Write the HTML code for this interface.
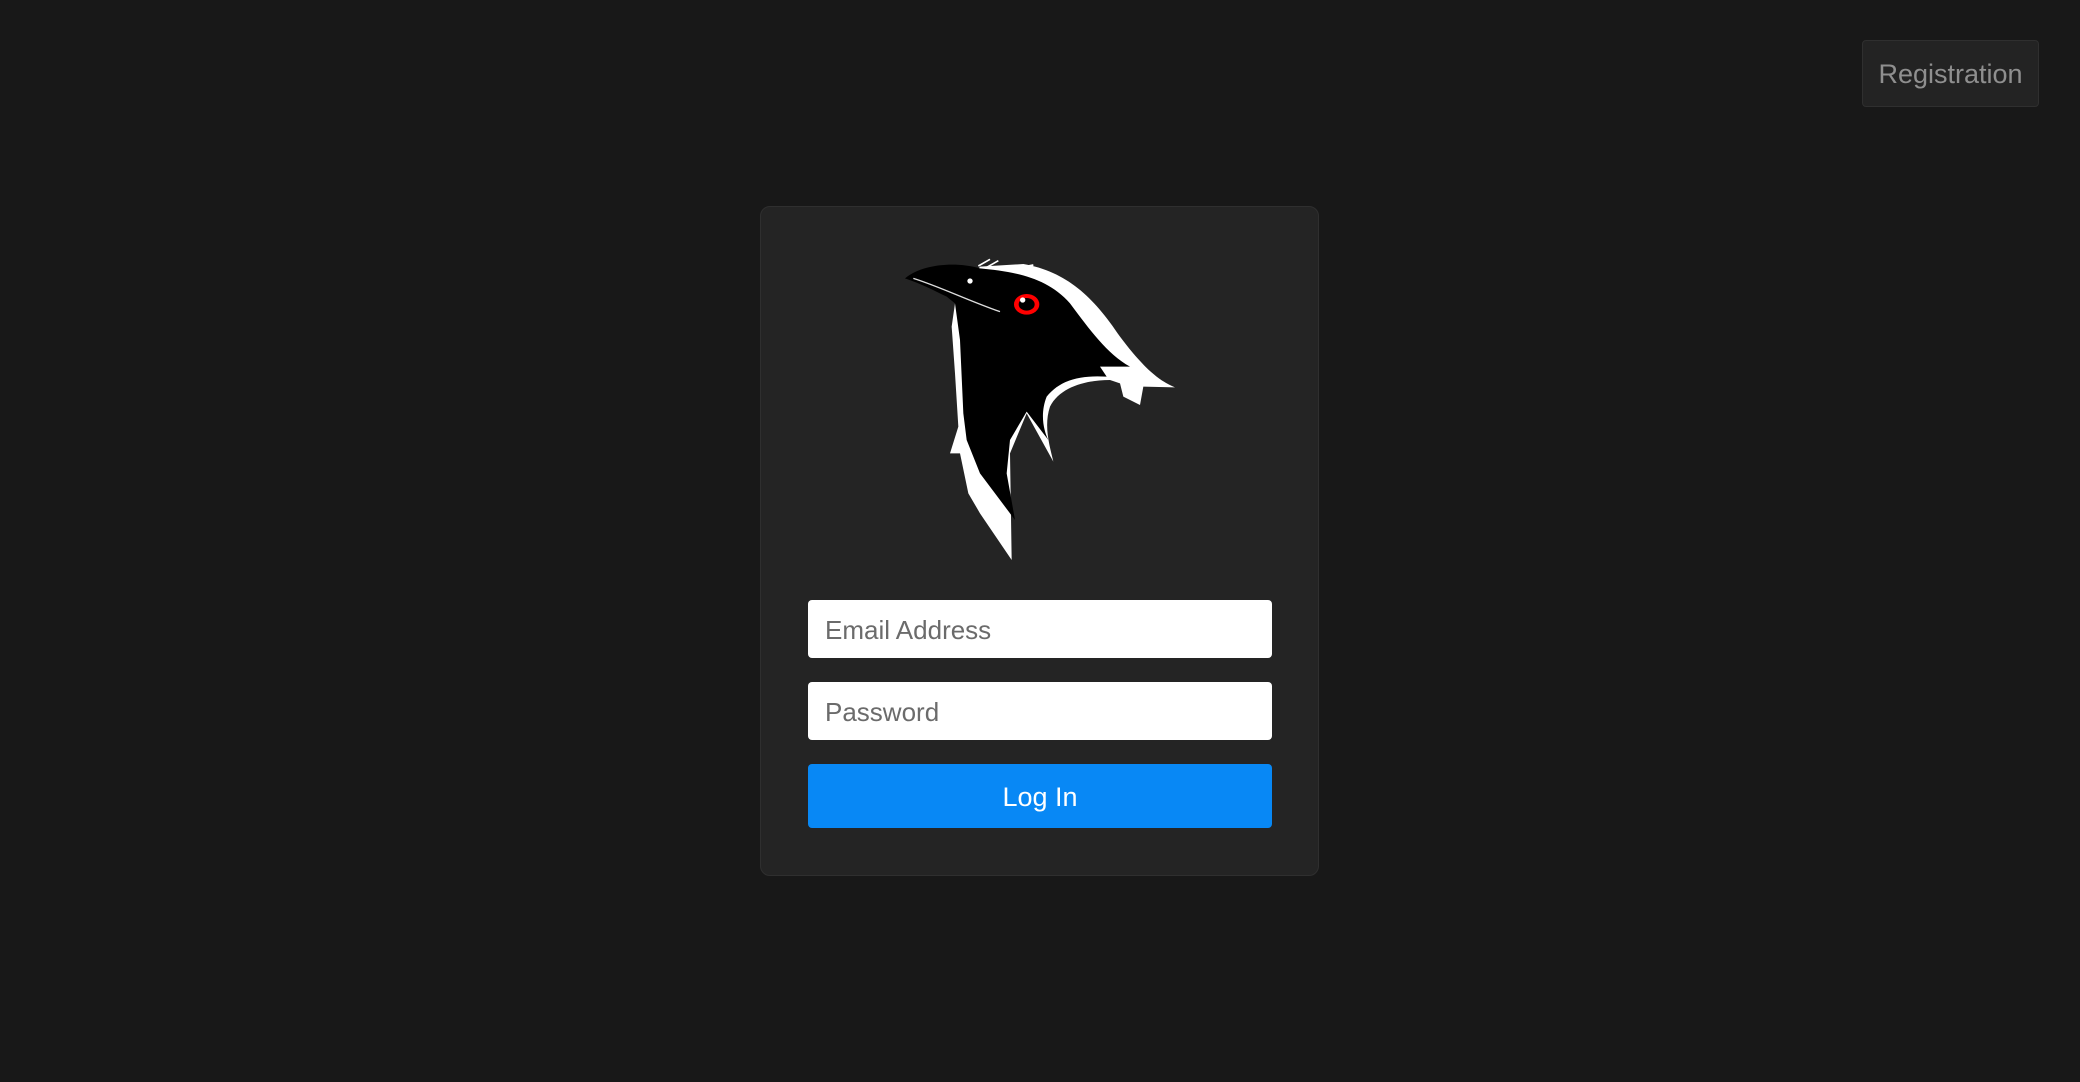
<!DOCTYPE html>
<html><head><meta charset="utf-8"><style>
html,body{margin:0;padding:0;background:#181818;width:2080px;height:1082px;overflow:hidden;font-family:"Liberation Sans",sans-serif;}
.reg{position:absolute;left:1862px;top:40px;width:175px;height:65px;background:#232323;border:1px solid #2f2f2f;border-radius:4px;color:#8f8f8f;font-size:27px;line-height:67px;text-align:center;}
.card{position:absolute;left:760px;top:206px;width:559px;height:670px;background:#242424;border:1px solid #2f2f2f;border-radius:10px;box-sizing:border-box;}
.inp{position:absolute;left:808px;width:464px;height:58px;background:#fff;border-radius:4px;color:#6b6b6b;font-size:26px;line-height:60px;box-sizing:border-box;padding-left:17px;}
.btn{position:absolute;left:808px;top:764px;width:464px;height:64px;background:#0888f5;border-radius:4px;color:#fff;font-size:27px;line-height:66px;text-align:center;}
svg{position:absolute;left:880px;top:240px;}
</style></head><body>
<div class="reg">Registration</div>
<div class="card"></div>
<svg width="320" height="330" viewBox="0 0 960 990">
<path fill="#fff" d="M300,80 L430,72 C560,95 640,170 720,290 C780,370 830,420 885,442 L790,440 L780,495 L730,470 L720,430 L690,420 C620,420 540,440 510,500 C490,560 510,620 520,665 L440,520 L390,640 L395,960 L300,820 L265,760 L240,640 L210,640 L235,560 L225,400 L215,260 L225,190 Z"/>
<path fill="#000" d="M75,115 C130,70 230,65 300,85 C400,95 500,110 570,190 C630,270 680,340 750,380 L660,380 L680,410 C600,405 540,420 500,470 C480,520 490,570 505,600 L440,515 L390,600 L380,700 L405,840 L300,700 L260,600 L250,520 L240,300 L225,190 L200,170 C160,150 120,130 75,115 Z"/>
<path fill="none" stroke="#ddd" stroke-width="4" d="M100,115 C180,140 260,180 360,215"/>
<path fill="none" stroke="#fff" stroke-width="5" d="M295,78 L330,58 M315,85 L355,62 M410,85 L460,75"/>
<ellipse cx="440" cy="193" rx="38" ry="31" fill="#f00"/>
<ellipse cx="440" cy="193" rx="24" ry="19" fill="#000"/>
<circle cx="428" cy="180" r="8" fill="#fff"/>
<circle cx="270" cy="123" r="8" fill="#fff"/>
</svg>
<div class="inp" style="top:600px">Email Address</div>
<div class="inp" style="top:682px">Password</div>
<div class="btn">Log In</div>
</body></html>
